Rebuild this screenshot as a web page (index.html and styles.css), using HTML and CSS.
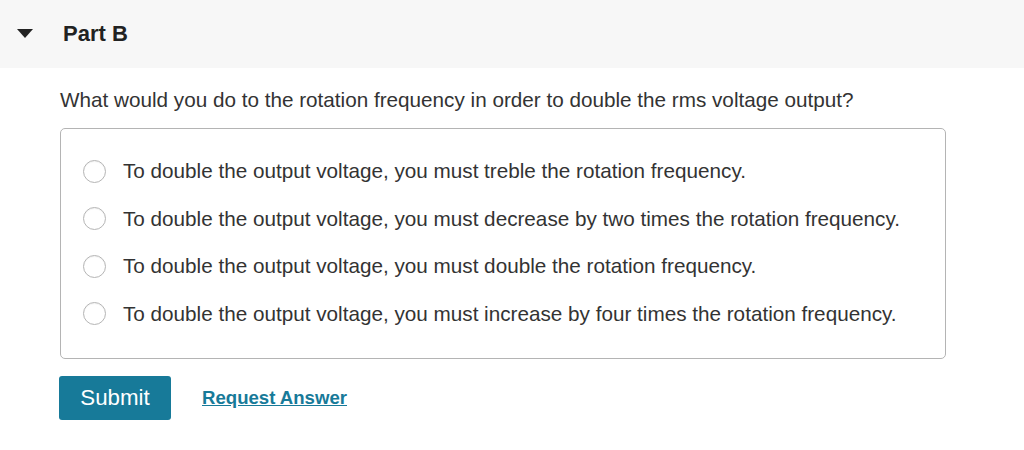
FILE: index.html
```html
<!DOCTYPE html>
<html lang="en">
<head>
    <meta charset="UTF-8">
    <meta name="viewport" content="width=device-width, initial-scale=1.0">
    <title>Part B</title>
    <link rel="stylesheet" href="styles.css">
</head>
<body>
    <div class="part-header">
        <span class="caret"></span>
        <h2 class="part-title">Part B</h2>
    </div>

    <div class="part-body">
        <p class="question">What would you do to the rotation frequency in order to double the rms voltage output?</p>

        <div class="choices">
            <label class="choice">
                <input class="radio" type="radio" name="answer">
                <span>To double the output voltage, you must treble the rotation frequency.</span>
            </label>
            <label class="choice">
                <input class="radio" type="radio" name="answer">
                <span>To double the output voltage, you must decrease by two times the rotation frequency.</span>
            </label>
            <label class="choice">
                <input class="radio" type="radio" name="answer">
                <span>To double the output voltage, you must double the rotation frequency.</span>
            </label>
            <label class="choice">
                <input class="radio" type="radio" name="answer">
                <span>To double the output voltage, you must increase by four times the rotation frequency.</span>
            </label>
        </div>

        <div class="actions">
            <button class="submit">Submit</button>
            <a class="request" href="#">Request Answer</a>
        </div>
    </div>
</body>
</html>
```

FILE: styles.css
```css
body {
    margin: 0;
    background: #fff;
    color: #333;
    font-family: "Liberation Sans", Arial, sans-serif;
}

.part-header {
    display: flex;
    align-items: center;
    height: 68px;
    padding-left: 17px;
    background: #f7f7f7;
}

.caret {
    width: 0;
    height: 0;
    border-left: 8px solid transparent;
    border-right: 8px solid transparent;
    border-top: 9px solid #222;
    margin-top: -2px;
}

.part-title {
    margin: 0 0 0 30px;
    font-size: 22px;
    font-weight: bold;
    color: #222;
}

.part-body {
    padding-left: 60px;
}

.question {
    margin: 0;
    padding-top: 19px;
    height: 41px;
    font-size: 20.7px;
    line-height: 26px;
}

.choices {
    display: flex;
    flex-direction: column;
    gap: 23.5px;
    box-sizing: border-box;
    width: 886px;
    padding: 30px 0 32px 22px;
    border: 1px solid #b4b4b4;
    border-radius: 5px;
}

.choice {
    display: flex;
    align-items: center;
    height: 24px;
    font-size: 20.7px;
}

.radio {
    appearance: none;
    -webkit-appearance: none;
    flex-shrink: 0;
    width: 23px;
    height: 23px;
    margin: 0 17px 0 0;
    border: 1px solid #b5b5b5;
    border-radius: 50%;
    background: #fff;
    box-shadow: inset 0 1px 1px rgba(0, 0, 0, 0.05);
}

.actions {
    display: flex;
    align-items: center;
    margin-top: 17px;
}

.submit {
    width: 112px;
    height: 44px;
    margin-left: -1px;
    border: none;
    border-radius: 3px;
    background: #177a99;
    color: #fff;
    font-family: "Liberation Sans", Arial, sans-serif;
    font-size: 22.3px;
}

.request {
    margin-left: 31px;
    color: #177a99;
    font-size: 18.6px;
    font-weight: bold;
    text-decoration: underline;
}
```
